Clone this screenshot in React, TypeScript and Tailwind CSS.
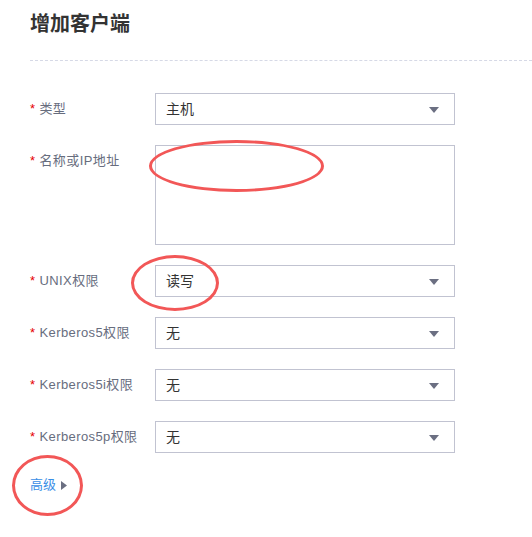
const fontStack = { fontFamily: '"Liberation Sans", "Noto Sans CJK SC", sans-serif' }

type Row = { label: string; value?: string; multiline?: boolean }

const rows: Row[] = [
  { label: "类型", value: "主机" },
  { label: "名称或IP地址", multiline: true },
  { label: "UNIX权限", value: "读写" },
  { label: "Kerberos5权限", value: "无" },
  { label: "Kerberos5i权限", value: "无" },
  { label: "Kerberos5p权限", value: "无" },
]

const Caret = () => (
  <svg width="10" height="6" viewBox="0 0 10 6" className="absolute right-[15px] top-[13px]">
    <path d="M0 0 L10 0 L5 6 Z" fill="#6b6f82" />
  </svg>
)

const Mark = ({ className }: { className: string }) => (
  <div className={"absolute rounded-[50%] border-[3px] border-[#f25757] pointer-events-none " + className} />
)

const App = () => {
  return (
    <div className="relative w-[532px] h-[537px] bg-white overflow-hidden" style={fontStack}>
      <div className="pt-[10px] pl-[30px]">
        <h1 className="text-[20px] leading-[28px] font-bold text-[#333]">增加客户端</h1>
        <div className="mt-[22px] border-t border-dashed border-[#d6d9e6]" />

        <div className="mt-[32px] flex flex-col gap-[20px]">
          {rows.map((row) => (
            <div key={row.label} className="flex">
              <div className="w-[125px] text-[13px] leading-[32px] tracking-[0.4px] text-[#676d7e]">
                <span className="text-[#e60000] mr-[4px]">*</span>
                {row.label}
              </div>
              {row.multiline ? (
                <div className="w-[300px] h-[100px] border border-[#c1c3d1] bg-white" />
              ) : (
                <div className="relative w-[300px] h-[32px] border border-[#c1c3d1] bg-white pl-[10px] text-[14px] leading-[30px] text-[#333]">
                  {row.value}
                  <Caret />
                </div>
              )}
            </div>
          ))}
        </div>

        <div className="mt-[22px] flex items-center gap-[5px] text-[13px] leading-[20px] text-[#3a8ee6]">
          <span>高级</span>
          <svg width="6" height="9" viewBox="0 0 6 9">
            <path d="M0 0 L6 4.5 L0 9 Z" fill="#6b6f82" />
          </svg>
        </div>
      </div>

      <Mark className="left-[149px] top-[140px] w-[175px] h-[52px]" />
      <Mark className="left-[131px] top-[255px] w-[88px] h-[56px]" />
      <Mark className="left-[12px] top-[455px] w-[71px] h-[61px]" />
    </div>
  )
}

export default App
